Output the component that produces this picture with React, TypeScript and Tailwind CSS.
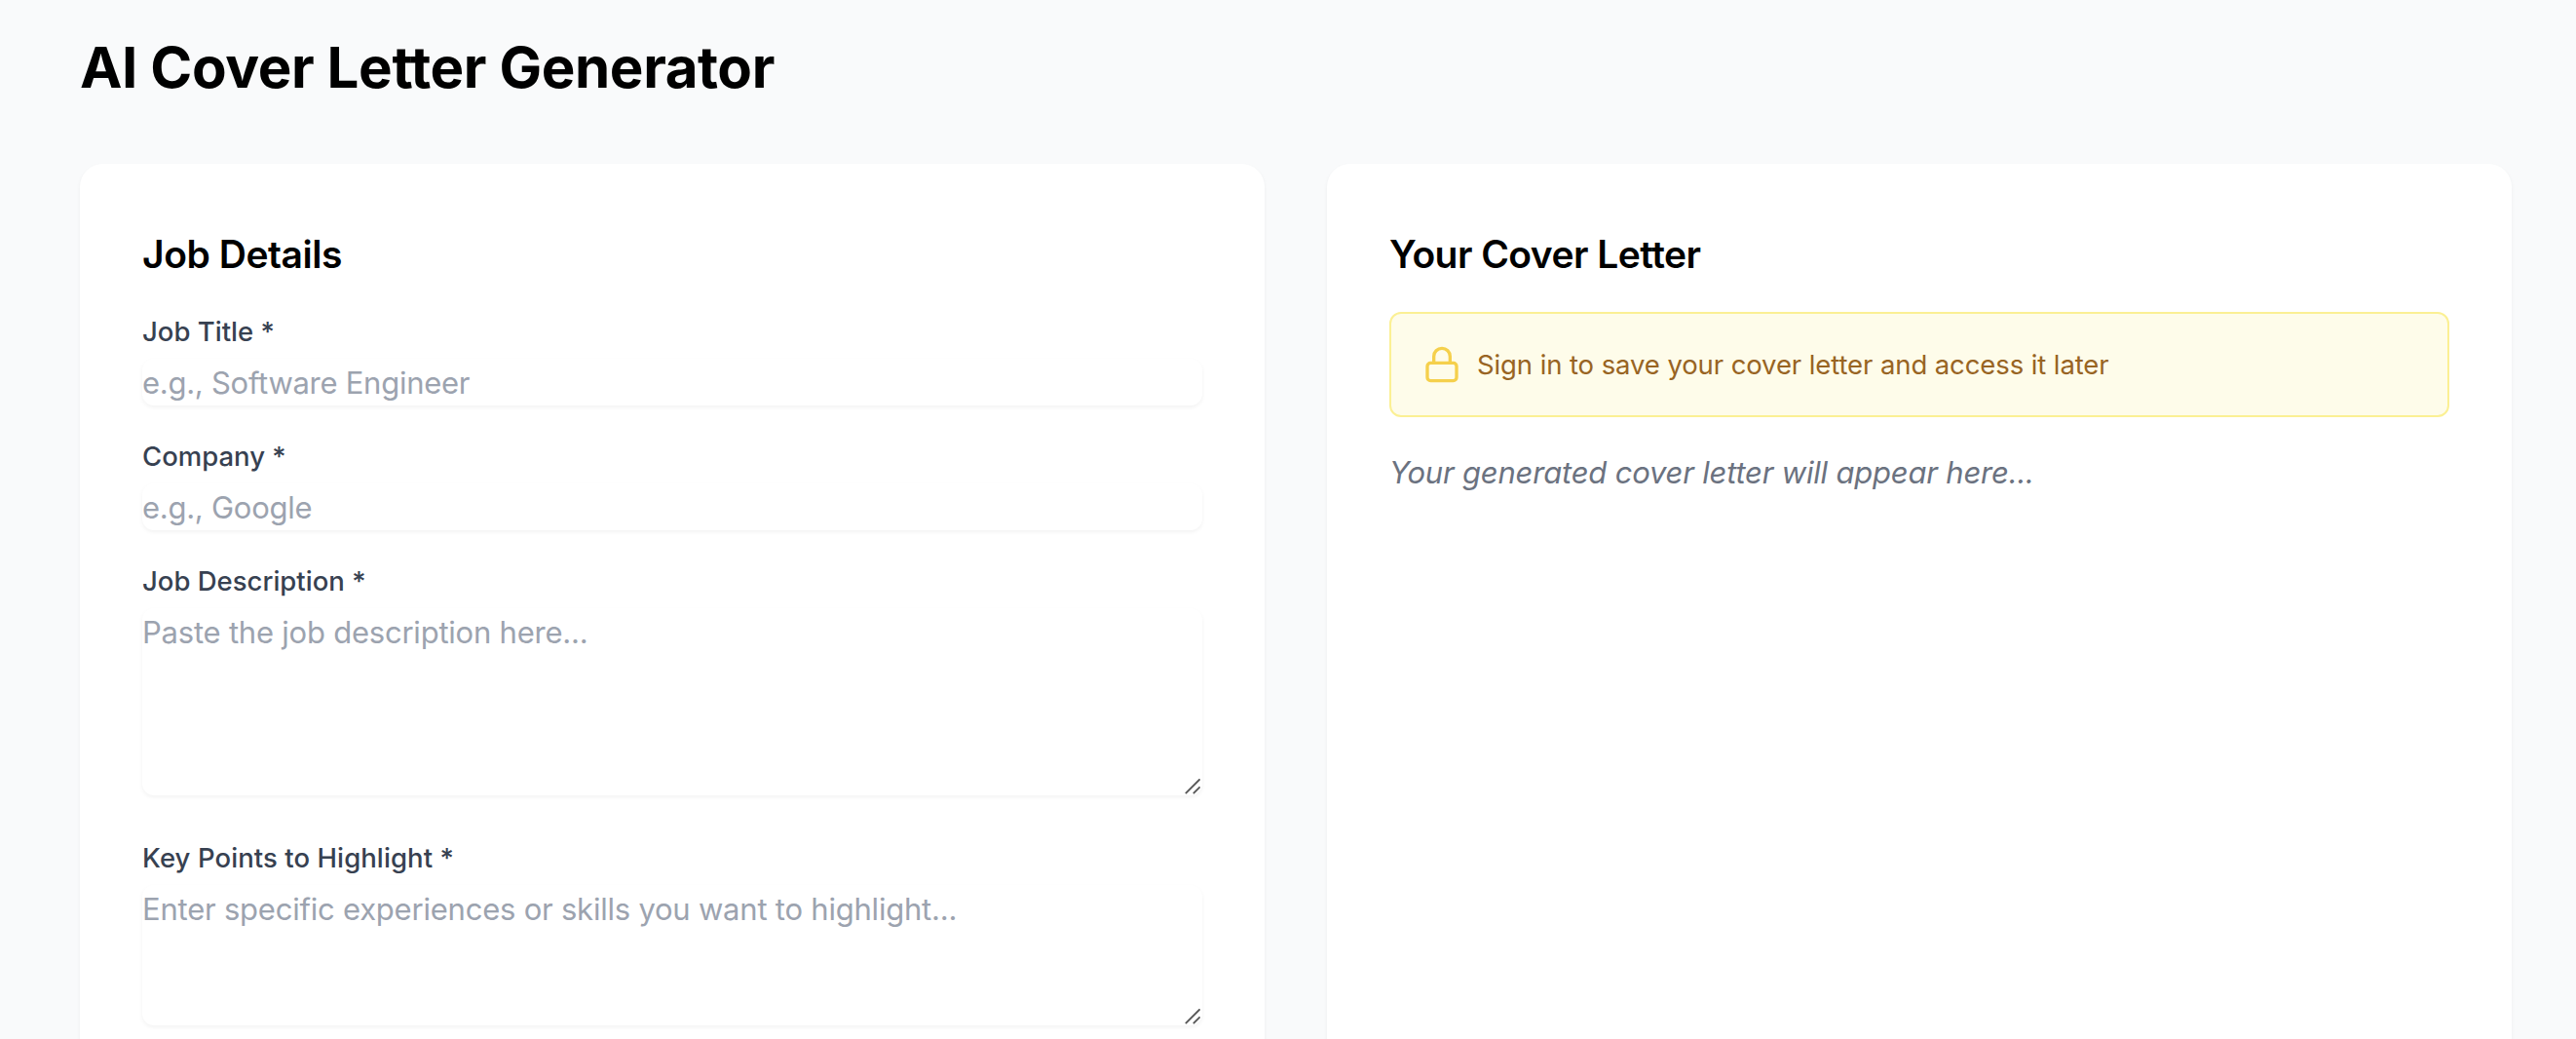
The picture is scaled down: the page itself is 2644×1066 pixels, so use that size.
import { Lock } from "lucide-react";

function ResizeGrip() {
  return (
    <svg
      className="pointer-events-none absolute right-[2px] bottom-[1px] size-4"
      viewBox="0 0 16 16"
      fill="none"
      stroke="#585858"
      strokeWidth="1.8"
      strokeLinecap="square"
    >
      <path d="M1.5 14.5 15 1M9.5 14.5 15 9" />
    </svg>
  );
}

const label = "block text-[27.5px] leading-10 font-medium text-[#374151]";
const control =
  "block w-full rounded-xl bg-white text-[31px] leading-[48px] text-[#374151] placeholder:text-[#9ca3af] shadow-[0_2px_4px_rgba(0,0,0,0.05)] outline-none resize-none overflow-hidden";

type AreaProps = {
  id: string;
  text: string;
  height: string;
  placeholder: string;
};

function Area({ id, text, height, placeholder }: AreaProps) {
  return (
    <div>
      <label htmlFor={id} className={label}>
        <span>{text}</span>
      </label>
      <div className="relative mt-2">
        <textarea
          id={id}
          placeholder={placeholder}
          className={`${control} pt-px tracking-[-0.22px] ${height}`}
        />
        <ResizeGrip />
      </div>
    </div>
  );
}

function Field({ id, text, placeholder }: { id: string; text: string; placeholder: string }) {
  return (
    <div>
      <label htmlFor={id} className={label}>
        <span>{text}</span>
      </label>
      <input
        id={id}
        placeholder={placeholder}
        className={`${control} mt-2 h-12 pt-[2px] tracking-[-0.27px]`}
      />
    </div>
  );
}

const card = "rounded-3xl bg-white p-16 shadow-[0_2px_4px_rgba(0,0,0,0.05)]";
const heading = "mb-8 pt-[2px] text-[39px] leading-[54px] font-semibold";

export default function App() {
  return (
    <div className="h-[1066px] overflow-hidden bg-[#f9fafb] pr-[66px] pl-[82px] font-[Inter,sans-serif] text-black">
      <h1 className="pt-[33px] pb-[63px] text-[58.2px] leading-[72px] font-bold tracking-[-0.4px]">
        <span>AI Cover Letter Generator</span>
      </h1>
      <div className="grid h-[1100px] grid-cols-2 gap-16">
        <section className={card}>
          <h2 className={`${heading} tracking-[-0.45px]`}>
            <span>Job Details</span>
          </h2>
          <form className="flex flex-col gap-8">
            <Field id="title" text="Job Title *" placeholder="e.g., Software Engineer" />
            <Field id="company" text="Company *" placeholder="e.g., Google" />
            <Area
              id="description"
              text="Job Description *"
              height="h-48"
              placeholder="Paste the job description here..."
            />
            <div className="mt-3 tracking-[0.08px]">
              <Area
                id="points"
                text="Key Points to Highlight *"
                height="h-36"
                placeholder="Enter specific experiences or skills you want to highlight..."
              />
            </div>
          </form>
        </section>
        <section className={card}>
          <h2 className={`${heading} tracking-[-0.55px]`}>
            <span>Your Cover Letter</span>
          </h2>
          <div className="mb-8 flex items-center gap-4 rounded-xl border-2 border-[#fbf094] bg-[#fefcea] p-8">
            <Lock className="size-10 text-[#f5d04c]" strokeWidth={2} />
            <p className="text-[27.5px] leading-10 tracking-[-0.1px] text-[#986423]">
              <span>Sign in to save your cover letter and access it later</span>
            </p>
          </div>
          <p className="pt-px text-[31px] leading-[48px] tracking-[-0.2px] text-[#6b7280] italic">
            <span>Your generated cover letter will appear here...</span>
          </p>
        </section>
      </div>
    </div>
  );
}
